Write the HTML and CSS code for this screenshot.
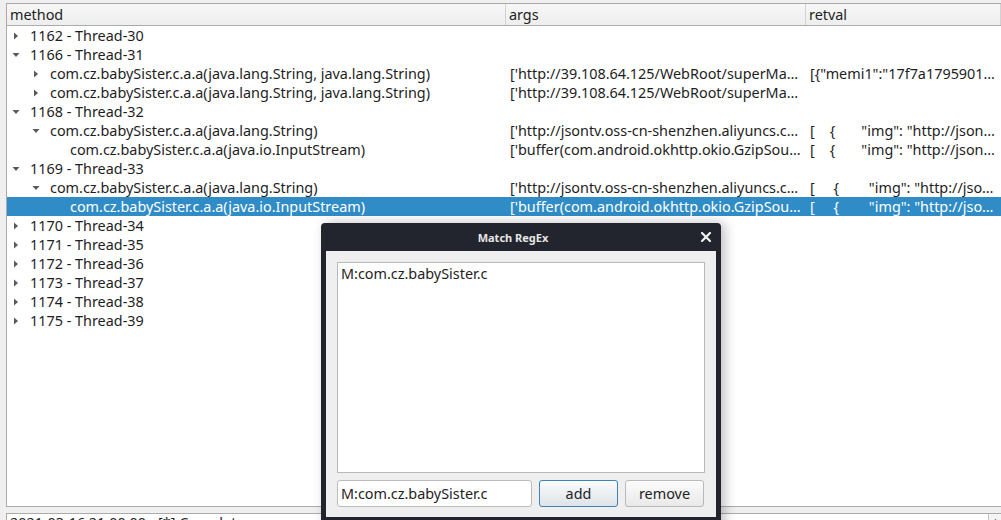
FILE: index.html
```html
<!DOCTYPE html>
<html>
<head>
<meta charset="utf-8">
<link rel="stylesheet" href="styles.css">
</head>
<body>
<div class="app">
  <div class="tree">
    <div class="header">
      <div class="hcell">method</div>
      <div class="hcell">args</div>
      <div class="hcell">retval</div>
    </div>
    <div class="rows">
      <div class="row"><div class="m l0"><span class="ar"><svg width="8" height="8" viewBox="0 0 8 8"><path d="M2 0.5 L6 4 L2 7.5 Z" fill="#5a5a5a"/></svg></span>1162 - Thread-30</div><div class="a"></div><div class="r"></div></div>
      <div class="row"><div class="m l0"><span class="ar"><svg width="8" height="8" viewBox="0 0 8 8"><path d="M0.5 2 L7.5 2 L4 6 Z" fill="#5a5a5a"/></svg></span>1166 - Thread-31</div><div class="a"></div><div class="r"></div></div>
      <div class="row"><div class="m l1"><span class="ar"><svg width="8" height="8" viewBox="0 0 8 8"><path d="M2 0.5 L6 4 L2 7.5 Z" fill="#5a5a5a"/></svg></span>com.cz.babySister.c.a.a(java.lang.String, java.lang.String)</div><div class="a">['http://39.108.64.125/WebRoot/superMa…</div><div class="r">[{"memi1":"17f7a1795901e4c2b7","memi2":""}]</div></div>
      <div class="row"><div class="m l1"><span class="ar"><svg width="8" height="8" viewBox="0 0 8 8"><path d="M2 0.5 L6 4 L2 7.5 Z" fill="#5a5a5a"/></svg></span>com.cz.babySister.c.a.a(java.lang.String, java.lang.String)</div><div class="a">['http://39.108.64.125/WebRoot/superMa…</div><div class="r"></div></div>
      <div class="row"><div class="m l0"><span class="ar"><svg width="8" height="8" viewBox="0 0 8 8"><path d="M0.5 2 L7.5 2 L4 6 Z" fill="#5a5a5a"/></svg></span>1168 - Thread-32</div><div class="a"></div><div class="r"></div></div>
      <div class="row"><div class="m l1"><span class="ar"><svg width="8" height="8" viewBox="0 0 8 8"><path d="M0.5 2 L7.5 2 L4 6 Z" fill="#5a5a5a"/></svg></span>com.cz.babySister.c.a.a(java.lang.String)</div><div class="a">['http://jsontv.oss-cn-shenzhen.aliyuncs.c…</div><div class="r">[    {       "img": "http://jsontv.oss-cn-shenzhen"</div></div>
      <div class="row"><div class="m l2">com.cz.babySister.c.a.a(java.io.InputStream)</div><div class="a">['buffer(com.android.okhttp.okio.GzipSou…</div><div class="r">[    {       "img": "http://jsontv.oss-cn-shenzhen"</div></div>
      <div class="row"><div class="m l0"><span class="ar"><svg width="8" height="8" viewBox="0 0 8 8"><path d="M0.5 2 L7.5 2 L4 6 Z" fill="#5a5a5a"/></svg></span>1169 - Thread-33</div><div class="a"></div><div class="r"></div></div>
      <div class="row"><div class="m l1"><span class="ar"><svg width="8" height="8" viewBox="0 0 8 8"><path d="M0.5 2 L7.5 2 L4 6 Z" fill="#5a5a5a"/></svg></span>com.cz.babySister.c.a.a(java.lang.String)</div><div class="a">['http://jsontv.oss-cn-shenzhen.aliyuncs.c…</div><div class="r">[     {        "img": "http://jsontv.oss-cn-shenzhen"</div></div>
      <div class="row sel"><div class="m l2">com.cz.babySister.c.a.a(java.io.InputStream)</div><div class="a">['buffer(com.android.okhttp.okio.GzipSou…</div><div class="r">[     {        "img": "http://jsontv.oss-cn-shenzhen"</div></div>
      <div class="row"><div class="m l0"><span class="ar"><svg width="8" height="8" viewBox="0 0 8 8"><path d="M2 0.5 L6 4 L2 7.5 Z" fill="#5a5a5a"/></svg></span>1170 - Thread-34</div><div class="a"></div><div class="r"></div></div>
      <div class="row"><div class="m l0"><span class="ar"><svg width="8" height="8" viewBox="0 0 8 8"><path d="M2 0.5 L6 4 L2 7.5 Z" fill="#5a5a5a"/></svg></span>1171 - Thread-35</div><div class="a"></div><div class="r"></div></div>
      <div class="row"><div class="m l0"><span class="ar"><svg width="8" height="8" viewBox="0 0 8 8"><path d="M2 0.5 L6 4 L2 7.5 Z" fill="#5a5a5a"/></svg></span>1172 - Thread-36</div><div class="a"></div><div class="r"></div></div>
      <div class="row"><div class="m l0"><span class="ar"><svg width="8" height="8" viewBox="0 0 8 8"><path d="M2 0.5 L6 4 L2 7.5 Z" fill="#5a5a5a"/></svg></span>1173 - Thread-37</div><div class="a"></div><div class="r"></div></div>
      <div class="row"><div class="m l0"><span class="ar"><svg width="8" height="8" viewBox="0 0 8 8"><path d="M2 0.5 L6 4 L2 7.5 Z" fill="#5a5a5a"/></svg></span>1174 - Thread-38</div><div class="a"></div><div class="r"></div></div>
      <div class="row"><div class="m l0"><span class="ar"><svg width="8" height="8" viewBox="0 0 8 8"><path d="M2 0.5 L6 4 L2 7.5 Z" fill="#5a5a5a"/></svg></span>1175 - Thread-39</div><div class="a"></div><div class="r"></div></div>
    </div>
  </div>
  <div class="status">
    <div class="status-text">2021-03-16 21:00:00 - [*] Complete</div>
    <div class="status-scroll"><svg width="7" height="5" viewBox="0 0 7 5"><path d="M0.5 4.5 L3.5 1 L6.5 4.5 Z" fill="#444"/></svg></div>
  </div>
</div>

<div class="dialog">
  <div class="titlebar">
    <div class="title">Match RegEx</div>
    <div class="close"><svg width="10" height="10" viewBox="0 0 10 10"><path d="M1 1 L9 9 M9 1 L1 9" stroke="#f2f2f2" stroke-width="2.2" stroke-linecap="square"/></svg></div>
  </div>
  <div class="dbody">
    <div class="list"><div class="item">M:com.cz.babySister.c</div></div>
    <div class="controls">
      <div class="edit">M:com.cz.babySister.c</div>
      <div class="btn default">add</div>
      <div class="btn">remove</div>
    </div>
  </div>
</div>
</body>
</html>
```

FILE: styles.css
```css
html, body {
  margin: 0;
  padding: 0;
  width: 1001px;
  height: 520px;
  overflow: hidden;
  background: #efefef;
  font-family: "Noto Sans", "Open Sans", sans-serif;
  font-size: 14.4px;
  color: #1e1e1e;
}

.app {
  padding: 3px 0 0 6px;
  height: 520px;
  box-sizing: border-box;
  display: flex;
  flex-direction: column;
  overflow: hidden;
}

.tree {
  height: 504px;
  flex-shrink: 0;
  box-sizing: border-box;
  border: 1px solid #ababab;
  border-right: none;
  background: #ffffff;
  overflow: hidden;
}

.header {
  display: grid;
  grid-template-columns: 499px 300px 1fr;
  height: 22px;
  box-sizing: border-box;
  border-bottom: 1px solid #ababab;
  background: linear-gradient(#f7f7f7, #eeeeee);
}

.hcell {
  padding-left: 3px;
  line-height: 21px;
  border-right: 1px solid #d2d2d2;
  color: #222;
}

.rows {
  display: flex;
  flex-direction: column;
}

.row {
  display: grid;
  grid-template-columns: 499px 300px 1fr;
  height: 19px;
  line-height: 19px;
  white-space: pre;
}

.row > div {
  overflow: hidden;
}

.row.sel {
  background: #308cc6;
  color: #ffffff;
}

.m {
  display: flex;
  align-items: center;
}

.m.l0 { padding-left: 5px; }
.m.l1 { padding-left: 25px; }
.m.l2 { padding-left: 63px; }

.ar {
  width: 18px;
  flex-shrink: 0;
  display: flex;
  align-items: center;
  justify-content: flex-start;
}

.a {
  padding-left: 4px;
}

.r {
  padding: 0 6px 0 4px;
  text-overflow: ellipsis;
}

.status {
  margin-top: 6px;
  height: 20px;
  flex-shrink: 0;
  border: 1px solid #ababab;
  border-right: none;
  border-bottom: none;
  background: #ffffff;
  display: flex;
  overflow: hidden;
}

.status-text {
  flex: 1;
  padding: 0 0 0 3px;
  line-height: 17px;
  white-space: pre;
}

.status-scroll {
  width: 12px;
  border-left: 1px solid #c8c8c8;
  background: #f4f4f4;
  display: flex;
  justify-content: center;
  padding-top: 4px;
}

.dialog {
  position: absolute;
  left: 321px;
  top: 223px;
  width: 400px;
  height: 310px;
  background: #22252e;
  border-radius: 4px 4px 0 0;
  box-shadow: 4px 0 12px rgba(0, 0, 0, 0.25);
  display: flex;
  flex-direction: column;
}

.titlebar {
  height: 28px;
  display: flex;
  align-items: center;
}

.title {
  flex: 1;
  text-align: center;
  color: #e6e6e6;
  font-weight: bold;
  font-size: 11px;
  padding-left: 14px;
}

.close {
  width: 30px;
  display: flex;
  align-items: center;
  justify-content: center;
}

.dbody {
  margin: 0 5px;
  height: 266px;
  background: #efefef;
  padding: 11px 11px 0 11px;
  box-sizing: border-box;
  display: flex;
  flex-direction: column;
  gap: 7px;
}

.list {
  height: 211px;
  flex-shrink: 0;
  box-sizing: border-box;
  border: 1px solid #b9b9b9;
  background: #ffffff;
  padding: 1px 3px;
}

.item {
  line-height: 19px;
}

.controls {
  display: flex;
  gap: 7px;
  height: 27px;
  flex-shrink: 0;
}

.edit {
  width: 195px;
  box-sizing: border-box;
  border: 1px solid #bcbcbc;
  border-radius: 3px;
  background: #ffffff;
  padding-left: 3px;
  line-height: 25px;
}

.btn {
  width: 79px;
  box-sizing: border-box;
  border: 1px solid #b9b9b9;
  border-radius: 3px;
  background: linear-gradient(#fbfbfb, #e9e9e9);
  text-align: center;
  line-height: 25px;
}

.btn.default {
  border-color: #3b83b8;
  background: linear-gradient(#fafbfc, #dde3e9);
}
```
